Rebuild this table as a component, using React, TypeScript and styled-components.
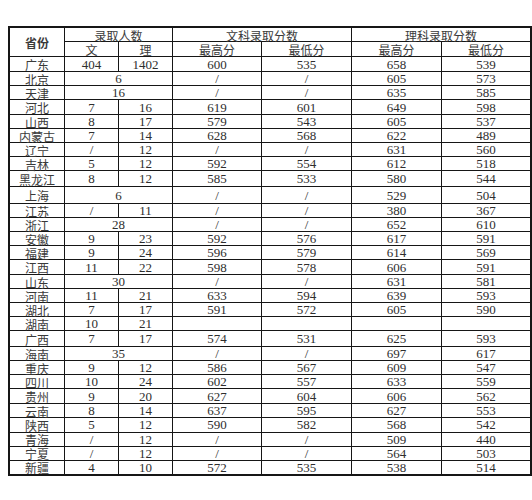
import React from "react";
import styled, { createGlobalStyle } from "styled-components";

const GlobalStyle = createGlobalStyle`
  html, body {
    margin: 0;
    padding: 0;
    background: #ffffff;
  }
`;

const Page = styled.div`
  padding: 26px 0 0 8px;
  width: 532px;
  height: 500px;
  box-sizing: border-box;
  font-family: "Liberation Serif", "Noto Sans CJK SC", serif;
  color: #2e2e2e;
`;

const Table = styled.table`
  border-collapse: separate;
  border-spacing: 0;
  table-layout: fixed;
  width: 522px;
  border-top: 2px solid #161616;
  border-left: 2px solid #161616;
`;

const Cell = styled.td<{ $h: number; $bold?: boolean; $last?: boolean }>`
  box-sizing: border-box;
  height: ${(p) => p.$h}px;
  padding: 0;
  text-align: center;
  vertical-align: middle;
  font-size: 13px;
  line-height: 11px;
  font-weight: ${(p) => (p.$bold ? 700 : 400)};
  border-right: ${(p) => (p.$last ? "2px" : "1.5px")} solid #161616;
  border-bottom: 1.5px solid #161616;
  white-space: nowrap;
`;

const HeadCell = styled(Cell)`
  color: #3a3a3a;
`;

const Name = styled.span`
  display: inline-block;
  font-family: "Noto Sans CJK SC", sans-serif;
  font-size: 12px;
  line-height: 11px;
  color: #3a3a3a;
  vertical-align: middle;
`;

const LastRow = styled.tr`
  td {
    border-bottom-width: 2px;
  }
`;

type Row = {
  name: string;
  h: number;
  merged?: string;
  v: string[];
};

const rows: Row[] = [
  { name: "广东", h: 15, v: ["404", "1402", "600", "535", "658", "539"] },
  { name: "北京", h: 14, merged: "6", v: ["/", "/", "605", "573"] },
  { name: "天津", h: 14, merged: "16", v: ["/", "/", "635", "585"] },
  { name: "河北", h: 15, v: ["7", "16", "619", "601", "649", "598"] },
  { name: "山西", h: 14, v: ["8", "17", "579", "543", "605", "537"] },
  { name: "内蒙古", h: 14, v: ["7", "14", "628", "568", "622", "489"] },
  { name: "辽宁", h: 14, v: ["/", "12", "/", "/", "631", "560"] },
  { name: "吉林", h: 14, v: ["5", "12", "592", "554", "612", "518"] },
  { name: "黑龙江", h: 16, v: ["8", "12", "585", "533", "580", "544"] },
  { name: "上海", h: 17, merged: "6", v: ["/", "/", "529", "504"] },
  { name: "江苏", h: 14, v: ["/", "11", "/", "/", "380", "367"] },
  { name: "浙江", h: 14, merged: "28", v: ["/", "/", "652", "610"] },
  { name: "安徽", h: 14, v: ["9", "23", "592", "576", "617", "591"] },
  { name: "福建", h: 14, v: ["9", "24", "596", "579", "614", "569"] },
  { name: "江西", h: 15, v: ["11", "22", "598", "578", "606", "591"] },
  { name: "山东", h: 14, merged: "30", v: ["/", "/", "631", "581"] },
  { name: "河南", h: 14, v: ["11", "21", "633", "594", "639", "593"] },
  { name: "湖北", h: 14, v: ["7", "17", "591", "572", "605", "590"] },
  { name: "湖南", h: 14, v: ["10", "21", "", "", "", ""] },
  { name: "广西", h: 16, v: ["7", "17", "574", "531", "625", "593"] },
  { name: "海南", h: 14, merged: "35", v: ["/", "/", "697", "617"] },
  { name: "重庆", h: 14, v: ["9", "12", "586", "567", "609", "547"] },
  { name: "四川", h: 14, v: ["10", "24", "602", "557", "633", "559"] },
  { name: "贵州", h: 15, v: ["9", "20", "627", "604", "606", "562"] },
  { name: "云南", h: 13, v: ["8", "14", "637", "595", "627", "553"] },
  { name: "陕西", h: 15, v: ["5", "12", "590", "582", "568", "542"] },
  { name: "青海", h: 14, v: ["/", "12", "/", "/", "509", "440"] },
  { name: "宁夏", h: 14, v: ["/", "12", "/", "/", "564", "503"] },
  { name: "新疆", h: 15, v: ["4", "10", "572", "535", "538", "514"] },
];

const widths = [55, 54, 54, 89, 90, 90, 90];

function DataRow({ row }: { row: Row }) {
  const cells = row.v.map((val, i) => (
    <Cell key={i} $h={row.h} $last={i === row.v.length - 1}>
      {val}
    </Cell>
  ));
  return (
    <>
      <Cell $h={row.h}>
        <Name>{row.name}</Name>
      </Cell>
      {row.merged !== undefined && (
        <Cell $h={row.h} colSpan={2}>
          {row.merged}
        </Cell>
      )}
      {cells}
    </>
  );
}

export default function App() {
  const last = rows[rows.length - 1];
  return (
    <Page>
      <GlobalStyle />
      <Table>
        <colgroup>
          {widths.map((w, i) => (
            <col key={i} style={{ width: w }} />
          ))}
        </colgroup>
        <thead>
          <tr>
            <HeadCell $h={14} rowSpan={2} $bold>
              <Name>省份</Name>
            </HeadCell>
            <HeadCell $h={14} colSpan={2}>
              <Name>录取人数</Name>
            </HeadCell>
            <HeadCell $h={14} colSpan={2}>
              <Name>文科录取分数</Name>
            </HeadCell>
            <HeadCell $h={14} colSpan={2} $last>
              <Name>理科录取分数</Name>
            </HeadCell>
          </tr>
          <tr>
            <HeadCell $h={15}>
              <Name>文</Name>
            </HeadCell>
            <HeadCell $h={15}>
              <Name>理</Name>
            </HeadCell>
            <HeadCell $h={15}>
              <Name>最高分</Name>
            </HeadCell>
            <HeadCell $h={15}>
              <Name>最低分</Name>
            </HeadCell>
            <HeadCell $h={15}>
              <Name>最高分</Name>
            </HeadCell>
            <HeadCell $h={15} $last>
              <Name>最低分</Name>
            </HeadCell>
          </tr>
        </thead>
        <tbody>
          {rows.slice(0, -1).map((r) => (
            <tr key={r.name}>
              <DataRow row={r} />
            </tr>
          ))}
          <LastRow>
            <DataRow row={last} />
          </LastRow>
        </tbody>
      </Table>
    </Page>
  );
}
